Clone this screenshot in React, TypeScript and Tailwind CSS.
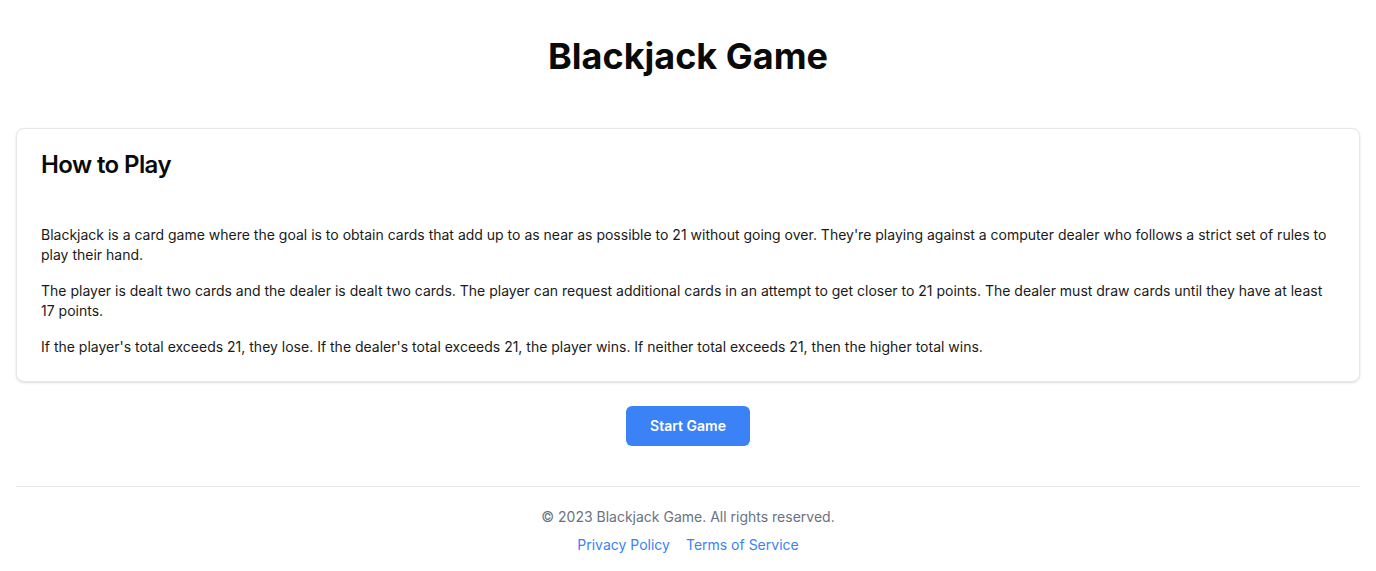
export default function App() {
  return (
    <div className="min-h-screen bg-white px-4 font-['Inter',sans-serif] text-[#0a0a0a]">
      <header className="pt-9 pb-[52px] text-center">
        <h1 className="text-4xl font-bold">Blackjack Game</h1>
      </header>

      <main>
        <section className="rounded-lg border border-[#e5e7eb] bg-white shadow-sm">
          <div className="p-6">
            <h2 className="text-2xl font-semibold leading-none tracking-tight">How to Play</h2>
          </div>
          <div className="space-y-4 px-6 pt-6 pb-6 text-sm leading-5 text-[#1a1a1a]">
            <p>
              Blackjack is a card game where the goal is to obtain cards that add up to as near as possible to 21
              without going over. They're playing against a computer dealer who follows a strict set of rules to play
              their hand.
            </p>
            <p>
              The player is dealt two cards and the dealer is dealt two cards. The player can request additional cards
              in an attempt to get closer to 21 points. The dealer must draw cards until they have at least 17 points.
            </p>
            <p>
              If the player's total exceeds 21, they lose. If the dealer's total exceeds 21, the player wins. If neither
              total exceeds 21, then the higher total wins.
            </p>
          </div>
        </section>

        <div className="mt-6 flex justify-center">
          <button className="h-10 rounded-md bg-[#3b82f6] px-6 text-sm font-semibold text-white">Start Game</button>
        </div>
      </main>

      <footer className="mt-10 border-t border-[#e5e7eb] pt-5 pb-4 text-center text-sm">
        <p className="text-[#6b7280]">© 2023 Blackjack Game. All rights reserved.</p>
        <div className="mt-2 flex justify-center gap-4 text-[#3b82f6]">
          <a href="#">Privacy Policy</a>
          <a href="#">Terms of Service</a>
        </div>
      </footer>
    </div>
  );
}
